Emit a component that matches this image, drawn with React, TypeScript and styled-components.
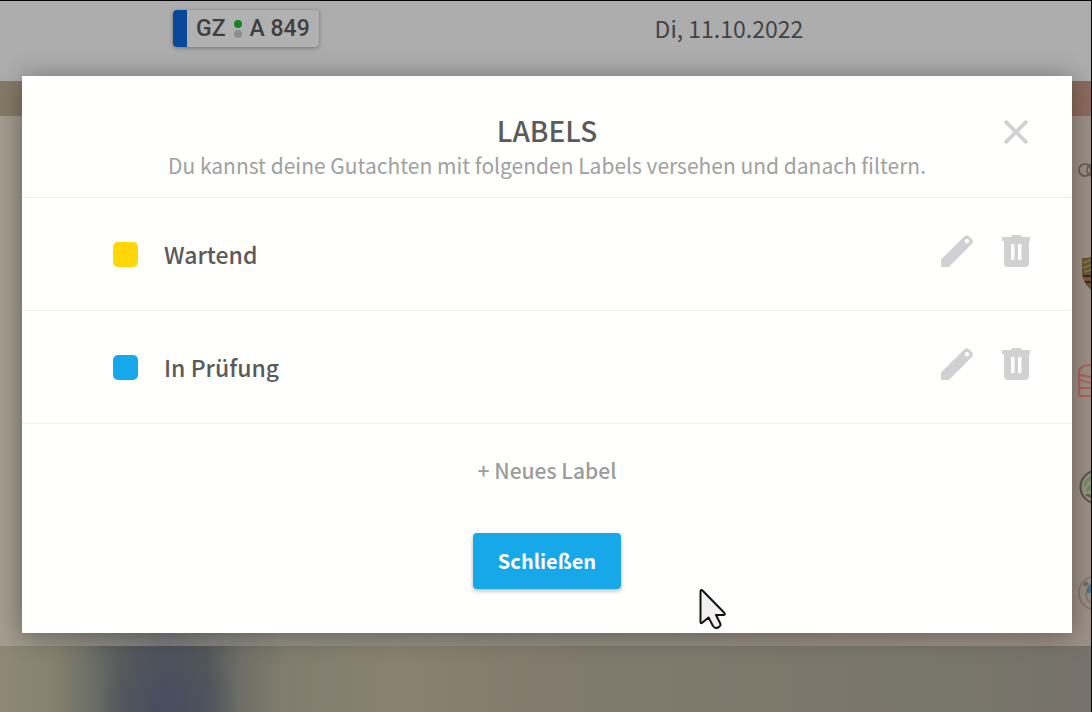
import React from "react";
import styled, { createGlobalStyle } from "styled-components";

const GlobalStyle = createGlobalStyle`
  * { box-sizing: border-box; }
  body {
    margin: 0;
    font-family: "Noto Sans CJK SC", "Noto Sans", sans-serif;
    color: #5a5a5a;
  }
  button { font: inherit; border: 0; padding: 0; background: none; cursor: pointer; }
  svg { display: block; }
`;

const Page = styled.div`
  position: relative;
  min-height: 100vh;
  display: flex;
  flex-direction: column;
  overflow: hidden;
  border-top: 1px solid #050505;
  border-right: 1px solid #050505;
  background:
    radial-gradient(ellipse 70px 80px at 168px 100%, rgba(70, 76, 96, 0.9) 0%, rgba(70, 76, 96, 0) 100%),
    linear-gradient(90deg, #8f8877 0%, #858170 5%, #6f7067 8%, #595c5c 11%, #50545a 15%, #55585a 19%, #6d6e66 22%, #807d6e 26%, #898171 36%, #827b6d 50%, #7d796b 65%, #79766a 85%, #76726b 100%);
`;

const TopBar = styled.header`
  display: grid;
  grid-template-columns: 60% 1fr;
  align-items: start;
  height: 80px;
  background: #adadad;
`;

const Plate = styled.div`
  display: flex;
  align-items: center;
  justify-self: start;
  height: 37px;
  padding-right: 9px;
  margin: 9px 0 0 173px;
  border-radius: 4px;
  overflow: hidden;
  background: #b1b1b1;
  box-shadow: 0 1px 4px rgba(0, 0, 0, 0.35);
  color: #3f3f41;
  font: 500 23px/37px "Roboto", sans-serif;
  white-space: nowrap;
`;

const PlateBand = styled.span`
  align-self: stretch;
  width: 14px;
  margin-right: 9px;
  background: #07489a;
`;

const Seals = styled.span`
  display: grid;
  gap: 2px;
  margin: 0 8px;
`;

const Seal = styled.span<{ $color: string }>`
  width: 8px;
  height: 8px;
  border-radius: 50%;
  background: ${(p) => p.$color};
`;

const DateText = styled.time`
  font-size: 23px;
  line-height: 32px;
  padding-top: 11px;
  color: #434345;
`;

const Band = styled.div`
  height: 35px;
  background: linear-gradient(90deg, #857b68 0%, #81796a 50%, #8c6b5d 98%);
`;

const BrandList = styled.ul`
  margin: 0;
  padding: 0;
  list-style: none;
  background: linear-gradient(90deg, #a59d8f 0%, #949084 6%, #7b7c7d 15%, #949084 26%, #938c80 60%, #9d9085 100%);
`;

const BrandItem = styled.li`
  display: flex;
  align-items: center;
  justify-content: flex-end;
  height: 106px;
`;

const Overlay = styled.div`
  position: absolute;
  inset: 75px 19px auto 22px;
`;

const Modal = styled.section`
  position: relative;
  background: #fffffe;
  box-shadow: 0 2px 24px rgba(0, 0, 0, 0.36);
`;

const ModalHeader = styled.header`
  display: grid;
  grid-template-columns: 44px 1fr 44px;
  padding: 34px 34px 17px;
  border-bottom: 1px solid #f0f0f0;
  text-align: center;
`;

const Heading = styled.div`
  grid-column: 2;
`;

const Title = styled.h1`
  margin: 0;
  font-size: 28px;
  line-height: 40px;
  font-weight: 500;
`;

const Subtitle = styled.p`
  margin: 0;
  font-size: 21px;
  line-height: 30px;
  white-space: nowrap;
  color: #a0a0a0;
`;

const IconButton = styled.button`
  display: grid;
  place-items: center;
  width: 44px;
  height: 44px;
  color: #d1d1d3;
`;

const LabelList = styled.ul`
  margin: 0;
  padding: 0;
  list-style: none;
`;

const LabelRow = styled.li`
  display: flex;
  align-items: center;
  height: 113px;
  padding: 0 34px 0 91px;
  border-bottom: 1px solid #f0f0f0;
`;

const Swatch = styled.span<{ $color: string }>`
  width: 25px;
  height: 25px;
  margin-right: 26px;
  border-radius: 5px;
  background: ${(p) => p.$color};
`;

const LabelName = styled.span`
  flex: 1;
  font-size: 23px;
  line-height: 32px;
  font-weight: 500;
`;

const RowActions = styled.div`
  display: flex;
  gap: 15px;
  padding-bottom: 6px;
`;

const ModalFooter = styled.footer`
  display: flex;
  flex-direction: column;
  align-items: center;
  gap: 47px;
  padding: 30px 0 44px;
`;

const AddButton = styled.button`
  font-size: 21px;
  line-height: 32px;
  font-weight: 500;
  color: #9c9c9c;
`;

const PrimaryButton = styled.button`
  height: 56px;
  padding: 0 25px;
  border-radius: 4px;
  background: #17a8e9;
  box-shadow: 0 2px 4px rgba(0, 0, 0, 0.28);
  color: #fff;
  font-size: 20px;
  line-height: 32px;
  font-weight: 700;
`;

const Pointer = styled.svg`
  position: absolute;
  left: 676px;
  top: 512px;
`;

const CloseIcon = () => (
  <svg width="26" height="26" viewBox="0 0 26 26" aria-hidden="true">
    <path d="M2 2 24 24M24 2 2 24" stroke="currentColor" strokeWidth="3.8" fill="none" />
  </svg>
);

const PencilIcon = () => (
  <svg width="32" height="32" viewBox="0 0 32 32" aria-hidden="true">
    <path
      fill="currentColor"
      fillRule="evenodd"
      d="M0 32V24.6L23.2 1.4Q25.7-1 28.2 1.4L30.8 4Q33.2 6.400 30.800 8.900L8 32ZM26 4a2.200 2.200 0 1 0 .01 0Z"
    />
  </svg>
);

const TrashIcon = () => (
  <svg width="28" height="32" viewBox="0 0 28 32" aria-hidden="true">
    <path
      fill="currentColor"
      fillRule="evenodd"
      d="M9 2Q9 0 11 0H18Q20 0 20 2H28V6H27V28Q27 32 23 32H6Q2 32 2 28V6H0V2ZM9 9V25H12.500V9ZM16 9V25H19.500V9Z"
    />
  </svg>
);

const Logo = ({ children }: { children: React.ReactNode }) => (
  <svg width="13" height="36" viewBox="0 0 13 36" fill="none" aria-hidden="true">
    {children}
  </svg>
);

const brands = [
  {
    name: "Audi",
    art: (
      <g stroke="#6b6059" strokeWidth="1.800">
        <circle cx="7" cy="19" r="6" />
        <circle cx="15" cy="19" r="6" />
      </g>
    ),
  },
  {
    name: "Porsche",
    art: (
      <g>
        <path d="M4 1Q10 1 13 0V33Q5 26 4 17Z" fill="#66563a" />
        <path d="M5 6 13 3M5 11 13 8M6 15 13 13" stroke="#8f7d31" strokeWidth="1.500" />
        <path d="M5 19H13M7 25H13" stroke="#35302b" strokeWidth="2" />
        <path d="M6 22H13" stroke="#985041" strokeWidth="2" />
      </g>
    ),
  },
  {
    name: "Seat",
    art: (
      <path
        d="M13 2Q1 2 1 10V33H13M2 12 13 14M2 17 13 20M2 25H13"
        stroke="#b0605a"
        strokeWidth="1.800"
      />
    ),
  },
  {
    name: "Skoda",
    art: (
      <g>
        <circle cx="19" cy="18" r="16.500" stroke="#57534d" strokeWidth="2" />
        <path d="M6 15Q8 8 13 7V11Q9 13 6 19ZM8 20 13 14V21L8 23Z" fill="#6c905c" />
        <path d="M7 26Q11 23 13 27V29Z" fill="#57604f" />
      </g>
    ),
  },
  {
    name: "BMW",
    art: (
      <g>
        <circle cx="18" cy="18" r="17" stroke="#7d756e" strokeWidth="1.500" />
        <path d="M8 18Q8 11 13 9V18Z" fill="#4f7489" />
        <path d="M8 18Q8 25 13 28" stroke="#7d756e" strokeWidth="1.500" />
        <path d="M5 9 8 6 11 9 7 12Z" fill="#746b64" />
      </g>
    ),
  },
];

const labels = [
  { name: "Wartend", color: "#ffd707" },
  { name: "In Prüfung", color: "#17a8e9" },
];

export default function App() {
  return (
    <>
      <GlobalStyle />
      <Page>
        <TopBar>
          <Plate>
            <PlateBand />
            <span>GZ</span>
            <Seals>
              <Seal $color="#168526" />
              <Seal $color="#8d8d8d" />
            </Seals>
            <span>A 849</span>
          </Plate>
          <DateText dateTime="2022-10-11">Di, 11.10.2022</DateText>
        </TopBar>
        <Band />
        <BrandList>
          {brands.map((brand) => (
            <BrandItem key={brand.name}>
              <Logo>{brand.art}</Logo>
            </BrandItem>
          ))}
        </BrandList>

        <Overlay>
          <Modal role="dialog" aria-modal="true" aria-labelledby="labels-title">
            <ModalHeader>
              <Heading>
                <Title id="labels-title">LABELS</Title>
                <Subtitle>
                  Du kannst deine Gutachten mit folgenden Labels versehen und danach filtern.
                </Subtitle>
              </Heading>
              <IconButton type="button" aria-label="Dialog schließen">
                <CloseIcon />
              </IconButton>
            </ModalHeader>
            <LabelList>
              {labels.map((label) => (
                <LabelRow key={label.name}>
                  <Swatch $color={label.color} />
                  <LabelName>{label.name}</LabelName>
                  <RowActions>
                    <IconButton type="button" aria-label={`${label.name} bearbeiten`}>
                      <PencilIcon />
                    </IconButton>
                    <IconButton type="button" aria-label={`${label.name} löschen`}>
                      <TrashIcon />
                    </IconButton>
                  </RowActions>
                </LabelRow>
              ))}
            </LabelList>
            <ModalFooter>
              <AddButton type="button">+ Neues Label</AddButton>
              <PrimaryButton type="button">Schließen</PrimaryButton>
            </ModalFooter>
            <Pointer width="29" height="42" viewBox="0 0 29 42" aria-hidden="true">
              <path
                d="M4.500 2.500Q2.500 1 2.500 4V34Q2.500 36 4.500 34.500L10.500 29.500L15 38Q17 41 20 39.500Q23.500 38 22 35L18 27H25.500Q28 27 26 24.500Z"
                fill="#f1efef"
                stroke="#111"
                strokeWidth="2"
                strokeLinejoin="round"
              />
            </Pointer>
          </Modal>
        </Overlay>
      </Page>
    </>
  );
}
